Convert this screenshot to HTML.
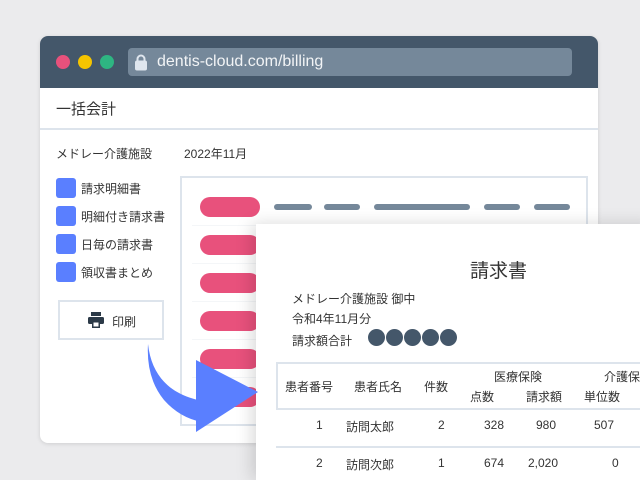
<!DOCTYPE html>
<html><head><meta charset="utf-8"><style>
*{margin:0;padding:0;box-sizing:border-box}
html,body{width:640px;height:480px;overflow:hidden}
body{background:#ebebed;font-family:"Liberation Sans","Noto Sans CJK JP",sans-serif;color:#333;position:relative}
.abs{position:absolute}
.win{left:40px;top:36px;width:558px;height:407px;background:#fff;border-radius:8px;overflow:hidden;box-shadow:0 1px 4px rgba(0,0,0,.12)}
.bar{left:0;top:0;width:558px;height:52px;background:#44576a}
.dot{width:14px;height:14px;border-radius:50%;top:19px}
.url{left:88px;top:12px;width:444px;height:28px;background:#75889a;border-radius:4px;color:#f2f4f6;font-size:16px;line-height:28px;padding-left:29px}
.t{font-size:12px;white-space:nowrap}
.sq{width:20px;height:20px;background:#5a7fff;border-radius:3px}
.pill{width:60px;height:20px;border-radius:10px;background:#e8517c}
.dash{height:6px;border-radius:3px;background:#75889a;top:204px}
.doc{left:256px;top:224px;width:400px;height:256px;background:#fff;box-shadow:-4px 0 16px rgba(0,0,0,.15)}
.d{font-size:12px;color:#333;white-space:nowrap}
.c{width:17px;height:17px;border-radius:50%;background:#44576a;top:105px}
</style></head><body>
<div class="abs win">
 <div class="abs bar">
  <div class="abs dot" style="left:16px;background:#e8517c"></div>
  <div class="abs dot" style="left:38px;background:#f5c400"></div>
  <div class="abs dot" style="left:60px;background:#2eb582"></div>
  <div class="abs url">dentis-cloud.com/billing
   <svg class="abs" style="left:6px;top:6px" width="14" height="17" viewBox="0 0 14 17"><path d="M3.5 7V5a3.5 3.5 0 017 0v2" stroke="#dfe6ee" stroke-width="2" fill="none"/><rect x="1" y="6.5" width="12" height="10" rx="2" fill="#dfe6ee"/></svg>
  </div>
 </div>
 <div class="abs" style="left:16px;top:62px;font-size:15px;color:#333">一括会計</div>
 <div class="abs" style="left:0;top:92px;width:558px;height:2px;background:#dde4ec"></div>
 <div class="abs t" style="left:16px;top:109px">メドレー介護施設</div>
 <div class="abs t" style="left:144px;top:109px">2022年11月</div>
</div>
<div class="abs sq" style="left:56px;top:178px"></div><div class="abs t" style="left:81px;top:180px">請求明細書</div>
<div class="abs sq" style="left:56px;top:206px"></div><div class="abs t" style="left:81px;top:208px">明細付き請求書</div>
<div class="abs sq" style="left:56px;top:234px"></div><div class="abs t" style="left:81px;top:236px">日毎の請求書</div>
<div class="abs sq" style="left:56px;top:262px"></div><div class="abs t" style="left:81px;top:264px">領収書まとめ</div>
<div class="abs" style="left:58px;top:300px;width:106px;height:40px;border:2px solid #dde4ec;background:#fff"></div>
<svg class="abs" style="left:87px;top:311px" width="18" height="18" viewBox="0 0 18 18"><rect x="4" y="1" width="10" height="4" fill="#2c3a48"/><rect x="1" y="6" width="16" height="7" rx="1.5" fill="#2c3a48"/><rect x="5" y="10" width="8" height="7" fill="#2c3a48"/><rect x="6.5" y="11.5" width="5" height="4" fill="#fff"/></svg>
<div class="abs t" style="left:112px;top:313px">印刷</div>
<div class="abs" style="left:180px;top:176px;width:408px;height:250px;border:2px solid #dde4ec;background:#fff"></div>
<div class="abs" style="left:192px;top:188px;width:386px;height:236px;background:#f4f6f8"></div>
<div class="abs" style="left:192px;top:188px;width:386px;height:37px;background:#fff"></div>
<div class="abs" style="left:192px;top:226px;width:386px;height:37px;background:#fff"></div>
<div class="abs" style="left:192px;top:264px;width:386px;height:37px;background:#fff"></div>
<div class="abs" style="left:192px;top:302px;width:386px;height:37px;background:#fff"></div>
<div class="abs" style="left:192px;top:340px;width:386px;height:37px;background:#fff"></div>
<div class="abs" style="left:192px;top:378px;width:386px;height:46px;background:#fff"></div>
<div class="abs pill" style="left:200px;top:197px"></div>
<div class="abs pill" style="left:200px;top:235px"></div>
<div class="abs pill" style="left:200px;top:273px"></div>
<div class="abs pill" style="left:200px;top:311px"></div>
<div class="abs pill" style="left:200px;top:349px"></div>
<div class="abs pill" style="left:200px;top:387px"></div>
<div class="abs dash" style="left:274px;width:38px"></div>
<div class="abs dash" style="left:324px;width:36px"></div>
<div class="abs dash" style="left:374px;width:96px"></div>
<div class="abs dash" style="left:484px;width:36px"></div>
<div class="abs dash" style="left:534px;width:36px"></div>
<div class="abs doc">
 <div class="abs" style="left:214px;top:32px;font-size:19px;color:#333">請求書</div>
 <div class="abs d" style="left:36px;top:66px">メドレー介護施設 御中</div>
 <div class="abs d" style="left:36px;top:86px">令和4年11月分</div>
 <div class="abs d" style="left:36px;top:108px">請求額合計</div>
 <div class="abs c" style="left:112px"></div><div class="abs c" style="left:130px"></div><div class="abs c" style="left:148px"></div><div class="abs c" style="left:166px"></div><div class="abs c" style="left:184px"></div>
 <div class="abs" style="left:20px;top:138px;width:400px;height:48px;border:2px solid #dde4ec"></div>
 <div class="abs d" style="left:29px;top:154px">患者番号</div>
 <div class="abs d" style="left:98px;top:154px">患者氏名</div>
 <div class="abs d" style="left:168px;top:154px">件数</div>
 <div class="abs d" style="left:238px;top:144px">医療保険</div>
 <div class="abs d" style="left:348px;top:144px">介護保険</div>
 <div class="abs d" style="left:214px;top:164px">点数</div>
 <div class="abs d" style="left:270px;top:164px">請求額</div>
 <div class="abs d" style="left:328px;top:164px">単位数</div>
 <div class="abs d" style="left:60px;top:194px">1</div>
 <div class="abs d" style="left:90px;top:194px">訪問太郎</div>
 <div class="abs d" style="left:182px;top:194px">2</div>
 <div class="abs d" style="left:228px;top:194px">328</div>
 <div class="abs d" style="left:280px;top:194px">980</div>
 <div class="abs d" style="left:338px;top:194px">507</div>
 <div class="abs" style="left:20px;top:222px;width:400px;height:2px;background:#dde4ec"></div>
 <div class="abs d" style="left:60px;top:232px">2</div>
 <div class="abs d" style="left:90px;top:232px">訪問次郎</div>
 <div class="abs d" style="left:182px;top:232px">1</div>
 <div class="abs d" style="left:228px;top:232px">674</div>
 <div class="abs d" style="left:272px;top:232px">2,020</div>
 <div class="abs d" style="left:356px;top:232px">0</div>
</div>
<svg class="abs" style="left:140px;top:340px" width="130" height="100" viewBox="0 0 130 100">
 <path d="M8 4 C12 40 35 58 70 62 L62 82 Q40 78 24 60 Q6 38 8 4 Z" fill="#5a7fff"/>
 <path d="M56 20 L118 52 L56 92 Z" fill="#5a7fff"/>
</svg>
</body></html>
